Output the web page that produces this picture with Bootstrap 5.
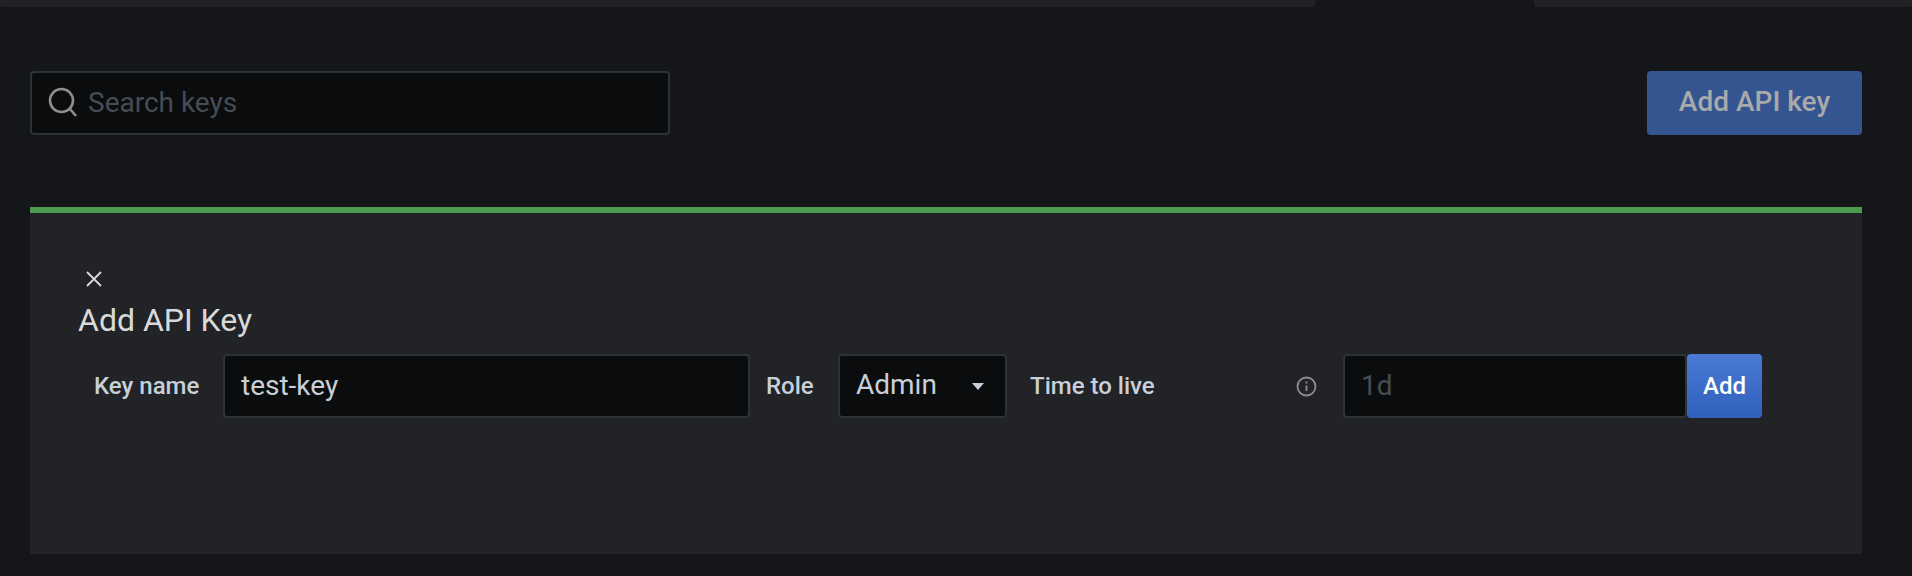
<!DOCTYPE html>
<html lang="en">

<head>
    <meta charset="UTF-8">
    <meta name="viewport" content="width=device-width, initial-scale=1.0">
    <title>API Keys</title>
    <link href="https://cdn.jsdelivr.net/npm/bootstrap@5.3.0/dist/css/bootstrap.min.css" rel="stylesheet">
    <style>
        body {
            background: #141619;
            font-family: Roboto, "Liberation Sans", sans-serif;
            color: #d8d9da;
        }

        .top-strip { height: 7px; }
        .strip-seg { background: #202226; border-radius: 0 0 3px 3px; }
        .strip-left { width: 1315px; }
        .strip-right { width: 378px; margin-left: auto; }

        .page-wrap { padding: 64px 50px 0 30px; }
        .search-box { width: 640px; height: 64px; }
        .search-box svg { position: absolute; left: 17px; top: 15px; }

        .dark-input {
            height: 64px;
            background-color: #0b0c0e;
            border: 2px solid #2c3235;
            border-radius: 4px;
            font-size: 28px;
            color: #c7d0d9;
            padding: 0 16px 2px;
            box-shadow: none;
        }
        .dark-input:focus { background-color: #0b0c0e; color: #c7d0d9; border-color: #2c3235; box-shadow: none; }
        .dark-input::placeholder { color: #464c54; opacity: 1; }
        .search-box .dark-input { padding-left: 56px; }

        .add-key-btn {
            width: 215px;
            height: 64px;
            padding: 0 0 2px;
            border: 0;
            border-radius: 4px;
            background: #34558f;
            color: #a8a9aa;
            font-size: 28px;
            font-weight: 500;
        }
        .add-key-btn:disabled { background: #34558f; color: #a8a9aa; opacity: 1; }

        .key-panel {
            margin-top: 72px;
            height: 347px;
            background: #212327;
            border-top: 6px solid #4e9a50;
            padding: 58px 48px 0 48px;
        }
        .close-x { display: block; margin-left: 8px; height: 16px; line-height: 0; }
        .close-x svg { display: block; }
        .panel-title { font-size: 32px; font-weight: 400; line-height: 36px; margin: 15px 0 0; color: #d8d9da; }

        .key-form { margin-top: 16px; height: 64px; }
        .form-lbl { font-size: 24px; font-weight: 500; color: #c7d0d9; flex: none; height: 64px; }
        .lbl-name { width: 145px; padding-left: 16px; }
        .lbl-role { width: 88px; padding-left: 16px; }
        .lbl-ttl { width: 336px; padding-left: 23px; }
        .lbl-ttl svg { margin-left: auto; margin-right: 26px; }
        .input-name { width: 527px; flex: none; }
        .input-ttl { width: 344px; flex: none; }
        .role-select {
            width: 169px;
            flex: none;
            padding-right: 16px;
            background-image: url("data:image/svg+xml,%3Csvg xmlns='http://www.w3.org/2000/svg' width='14' height='9'%3E%3Cpath d='M1 1h12L7 8z' fill='%23c7d0d9'/%3E%3C/svg%3E");
            background-repeat: no-repeat;
            background-position: right 20px center;
            background-size: 14px 9px;
        }
        .submit-btn {
            width: 75px;
            height: 64px;
            flex: none;
            margin-left: 0;
            padding: 0;
            border: 0;
            border-radius: 4px;
            background: linear-gradient(#4a7ad6, #3160bb);
            color: #fff;
            font-size: 24px;
            font-weight: 500;
        }
    </style>
</head>

<body>
    <div class="top-strip d-flex">
        <div class="strip-seg strip-left"></div>
        <div class="strip-seg strip-right"></div>
    </div>

    <div class="page-wrap">
        <!-- search + add -->
        <div class="d-flex justify-content-between">
            <div class="search-box position-relative">
                <svg width="32" height="32" viewBox="0 0 32 32" fill="none" stroke="#8e8e8e" stroke-width="2.6">
                    <circle cx="14.5" cy="14.5" r="11.5"/>
                    <path d="M23 23l6 7"/>
                </svg>
                <input type="text" class="form-control dark-input" placeholder="Search keys">
            </div>
            <button type="button" class="btn add-key-btn" disabled>Add API key</button>
        </div>

        <!-- add key panel -->
        <div class="key-panel">
            <span class="close-x">
                <svg width="16" height="16" viewBox="0 0 16 16" stroke="#d8d9da" stroke-width="1.8">
                    <path d="M1 1l14 14M15 1L1 15"/>
                </svg>
            </span>
            <h5 class="panel-title">Add API Key</h5>
            <form class="key-form d-flex">
                <label class="form-lbl lbl-name d-flex align-items-center">Key name</label>
                <input type="text" class="form-control dark-input input-name" value="test-key">
                <label class="form-lbl lbl-role d-flex align-items-center">Role</label>
                <select class="form-select dark-input role-select">
                    <option>Admin</option>
                </select>
                <label class="form-lbl lbl-ttl d-flex align-items-center">Time to live
                    <svg width="21" height="21" viewBox="0 0 21 21" fill="none" stroke="#8e8e8e" stroke-width="1.8">
                        <circle cx="10.5" cy="10.5" r="9"/>
                        <path d="M10.5 9.5v5.5M10.5 5.5v2"/>
                    </svg>
                </label>
                <input type="text" class="form-control dark-input input-ttl" placeholder="1d">
                <button type="button" class="btn submit-btn">Add</button>
            </form>
        </div>
    </div>

    <script src="https://cdn.jsdelivr.net/npm/bootstrap@5.3.0/dist/js/bootstrap.bundle.min.js"></script>
</body>

</html>
